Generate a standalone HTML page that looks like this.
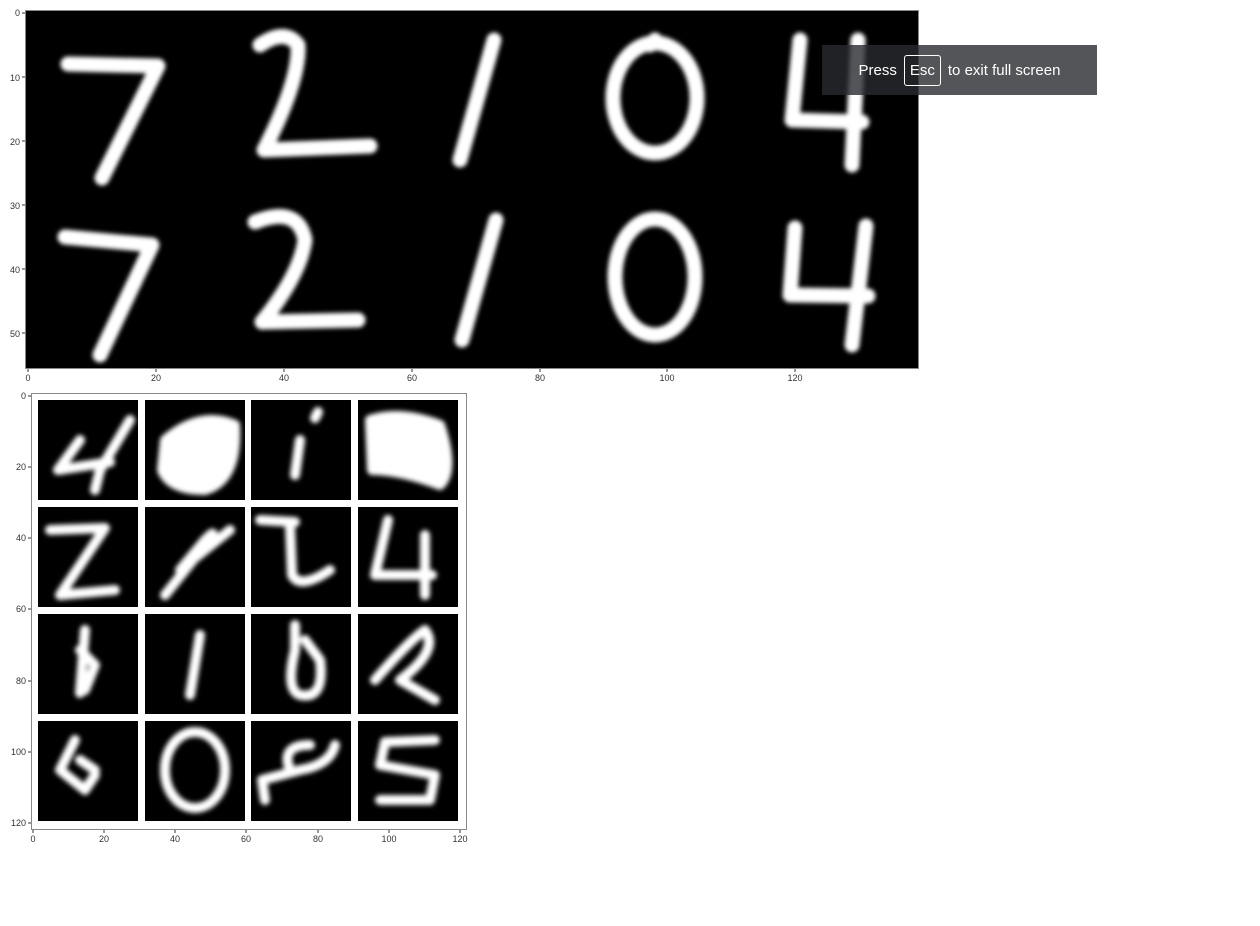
<!DOCTYPE html>
<html><head><style>
html,body{margin:0;padding:0;background:#fff;width:1260px;height:926px;overflow:hidden;font-family:"Liberation Sans",sans-serif}
svg{position:absolute;left:0;top:0}
.toast{position:absolute;left:822px;top:45px;width:275px;height:50px;background:rgba(40,42,46,0.8);color:#fff;font-size:15px;display:flex;align-items:center;justify-content:center}
.k{border:1px solid #fff;border-radius:3px;padding:6px 5px;margin:0 7px}
</style></head><body>
<svg width="1260" height="926" viewBox="0 0 1260 926">
<defs><filter id="b"><feGaussianBlur stdDeviation="2"/></filter><filter id="b2"><feGaussianBlur stdDeviation="2.5"/></filter></defs>
<rect x="25.5" y="10.5" width="893" height="358" fill="#000" stroke="#888" stroke-width="1"/>
<g fill="none" stroke="#fff" stroke-linecap="round" stroke-linejoin="round" stroke-width="15" filter="url(#b)">
<path d="M68 64 L158 66 L102 178"/>
<path d="M260 45 Q285 28 298 45 Q300 80 264 150 L370 146"/>
<path d="M494 40 L460 160"/>
<ellipse cx="655" cy="98" rx="42" ry="55"/><path d="M650 45 L655 40"/>
<path d="M800 40 L792 120 L862 122 M858 40 L852 165"/>
<path d="M65 237 L152 245 L100 355"/>
<path d="M255 222 Q298 205 305 240 Q300 275 262 322 L358 320"/>
<path d="M496 220 L462 340"/>
<ellipse cx="655" cy="277" rx="40" ry="58"/>
<path d="M795 228 L790 295 L868 296 M866 226 L852 345"/>
</g>
<g stroke="#333" stroke-width="1">
<path d="M22 13H25M22 77H25M22 141H25M22 205H25M22 269H25M22 333H25"/>
<path d="M28 369V372M156 369V372M284 369V372M412 369V372M540 369V372M667 369V372M795 369V372"/>
<path d="M28 396H31M28 467H31M28 538H31M28 609H31M28 681H31M28 752H31M28 823H31"/>
<path d="M33 830V833M104 830V833M175 830V833M246 830V833M318 830V833M389 830V833M460 830V833"/>
</g>
<g font-size="9" fill="#333" text-anchor="end">
<text x="20" y="16">0</text><text x="20" y="81">10</text><text x="20" y="145">20</text><text x="20" y="209">30</text><text x="20" y="273">40</text><text x="20" y="337">50</text>
</g>
<g font-size="9" fill="#333" text-anchor="middle">
<text x="28" y="381">0</text><text x="156" y="381">20</text><text x="284" y="381">40</text><text x="412" y="381">60</text><text x="540" y="381">80</text><text x="667" y="381">100</text><text x="795" y="381">120</text>
</g>
<rect x="31.5" y="393.5" width="435" height="436" fill="#fff" stroke="#888"/>
<g fill="#000">
<rect x="38" y="400" width="100" height="100"/><rect x="145" y="400" width="100" height="100"/><rect x="251" y="400" width="100" height="100"/><rect x="358" y="400" width="100" height="100"/>
<rect x="38" y="507" width="100" height="100"/><rect x="145" y="507" width="100" height="100"/><rect x="251" y="507" width="100" height="100"/><rect x="358" y="507" width="100" height="100"/>
<rect x="38" y="614" width="100" height="100"/><rect x="145" y="614" width="100" height="100"/><rect x="251" y="614" width="100" height="100"/><rect x="358" y="614" width="100" height="100"/>
<rect x="38" y="721" width="100" height="100"/><rect x="145" y="721" width="100" height="100"/><rect x="251" y="721" width="100" height="100"/><rect x="358" y="721" width="100" height="100"/>
</g>
<g fill="none" stroke="#fff" stroke-linecap="round" stroke-linejoin="round" stroke-width="10" filter="url(#b2)">
<path d="M80 440 L58 470 L110 462 M130 420 L100 470 L95 490"/>
<path d="M165 440 Q200 410 235 425 Q238 480 205 490 Q170 490 162 470 Z" fill="#fff"/>
<path d="M300 440 L295 475 M318 412 L315 418"/>
<path d="M370 420 Q400 410 440 425 Q455 470 440 485 Q400 470 372 470 Z" fill="#fff"/>
<path d="M50 530 L105 528 L60 595 L115 590"/>
<path d="M165 595 L205 545 Q220 525 205 540 L180 570 L230 530"/>
<path d="M260 520 L295 522 M290 525 L292 575 Q300 590 330 570"/>
<path d="M388 520 L375 575 L432 575 M425 535 L425 595"/>
<path d="M85 630 L80 693 M80 650 L95 665 L85 690"/>
<path d="M200 635 L190 695"/>
<path d="M295 625 L295 650 Q285 690 300 695 Q325 700 320 660 L305 640"/>
<path d="M375 680 Q410 640 425 630 Q440 650 400 680 L435 700"/>
<path d="M75 740 L60 770 L85 790 L95 775 M80 760 L95 770"/>
<ellipse cx="195" cy="770" rx="30" ry="38"/>
<path d="M265 800 L262 780 L300 770 Q330 765 335 745 M290 770 Q280 745 310 745"/>
<path d="M435 740 L385 742 L380 765 L435 775 L430 800 L380 800"/>
</g>
<g font-size="9" fill="#333" text-anchor="end">
<text x="26" y="399">0</text><text x="26" y="470">20</text><text x="26" y="541">40</text><text x="26" y="612">60</text><text x="26" y="684">80</text><text x="26" y="755">100</text><text x="26" y="826">120</text>
</g>
<g font-size="9" fill="#333" text-anchor="middle">
<text x="33" y="842">0</text><text x="104" y="842">20</text><text x="175" y="842">40</text><text x="246" y="842">60</text><text x="318" y="842">80</text><text x="389" y="842">100</text><text x="460" y="842">120</text>
</g>
</svg>
<div class="toast">Press<span class="k">Esc</span>to exit full screen</div>
</body></html>
